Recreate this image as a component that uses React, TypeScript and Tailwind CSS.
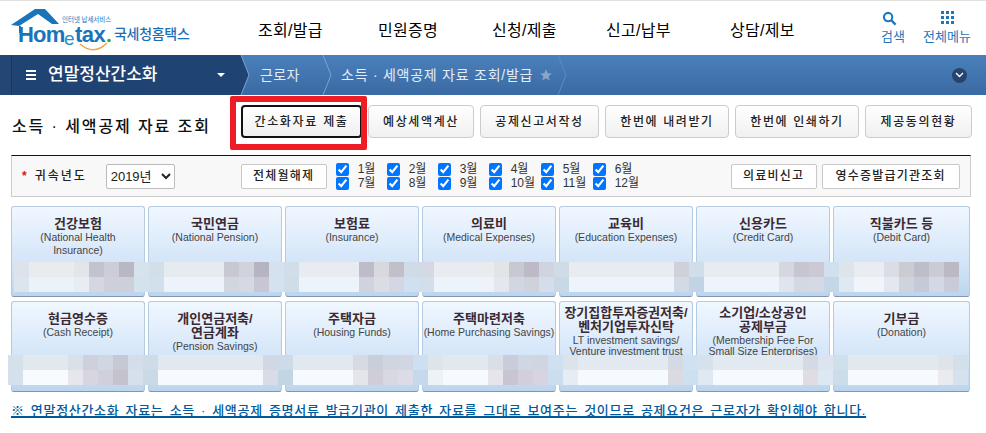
import React from 'react';

const KR = "font-['Liberation_Sans','Noto_Sans_CJK_KR',sans-serif]";

// 가림 처리된 모자이크 [색, 칸 수]
type Seg = [string, number];

const row1Top: Seg[] = [['#dde3ea',1],['#e8ecef',3],['#e2e5ea',1],['#c3c3cf',1],['#cdcdd7',1],['#bab7c4',1],['#d6e2ec',1],['#d2dfe9',1],['#e6ebf0',4],['#c8c8d3',1],['#d0d3dc',1],['#b7b4c1',1],['#d5e1ee',1],['#d1dde8',1],['#e8ecf0',4],['#bebcc8',1],['#d7d9de',1],['#c0bfca',1],['#cfdbe6',1],['#d5d9e6',1],['#e8ecf1',3],['#e9ecef',1],['#e3e4e8',1],['#c8c8d2',1],['#bdb9c6',1],['#d0d3e0',1],['#cfdce6',1],['#e7ecf0',7],['#ced0da',1],['#cfdee9',1],['#e6ecf0',5],['#d5d7e0',1],['#c6c5d0',1],['#cbc9d4',1],['#d0e0ef',1],['#dde5ea',1],['#e9edf1',2],['#dadde6',1],['#cdcbd2',1],['#bebdca',1],['#cbcbd6',1],['#bcb9c5',1]];
const row1Bottom: Seg[] = [['#dbe5ee',1],['#ecf2fa',3],['#e8edf3',1],['#d4d7e0',1],['#cdcfdb',2],['#d4e2ee',1],['#d2e0eb',1],['#ecf3fb',4],['#d2d6df',1],['#d5d9e2',1],['#c6c7d3',1],['#d4e2f0',1],['#cfdde9',1],['#ecf3fb',4],['#d0d3de',1],['#dadde6',1],['#d4d7e1',1],['#d0e0f0',1],['#d2deea',1],['#ecf3fb',3],['#eef3fa',1],['#e4e8ee',1],['#d2d6e2',1],['#cfd2db',1],['#d4ddeb',1],['#c8d9e5',1],['#eef4fc',7],['#d3dae6',1],['#c1d4e5',1],['#eef4fc',5],['#e0e4ec',1],['#d4d8e3',1],['#d5d9e4',1],['#c4d7e8',1],['#e0e8f1',1],['#f0f5fc',2],['#e3e8f0',1],['#cfd3de',1],['#c6cad8',1],['#d3d8e4',1],['#c8cbd9',1]];
const row2Top: Seg[] = [['#d5e0ea',1],['#e1e8ee',3],['#d8e0e8',1],['#cfd0dc',1],['#cfd7e2',1],['#c6c8d4',1],['#d3deea',1],['#cfdce8',1],['#e1e8ef',7],['#cfd8e3',1],['#cddbe8',1],['#e1e8ef',4],['#d7dae3',1],['#c8cfda',1],['#cfd6e0',1],['#d0d7e2',1],['#cde0f2',1],['#dde4ea',1],['#e2e9ee',3],['#d9dee7',1],['#c9ccda',1],['#cfd8e2',1],['#cfd5e1',1],['#cfe0f0',1],['#dbe4e9',1],['#e2e9f0',6],['#d3dae4',1],['#d0e2f2',1],['#d5e1ec',1],['#e2e9f0',6],['#d4dae4',1],['#dce5ef',1],['#cfdfec',1],['#e2e9ee',6],['#dfe4ea',1],['#d3e0ec',1]];
const row2Bottom: Seg[] = [['#d2e1eb',1],['#f7fbfe',3],['#e6e6ec',1],['#d7d5de',1],['#cfd0dc',1],['#c6c2cc',1],['#d6dfec',1],['#c9d9e6',1],['#f6fafe',7],['#d9dbe6',1],['#c2d5e3',1],['#f6fafe',4],['#e4e5ea',1],['#cfcdd6',1],['#d8d8e0',1],['#dcdbe6',1],['#c6d9ec',1],['#edf2f6',1],['#f6fafe',3],['#e7e4ec',1],['#c8c5d2',1],['#d2cfdb',1],['#d6d4e0',1],['#cbdeee',1],['#e6ecf3',1],['#f6fafe',6],['#dbd9e1',1],['#cde0ef',1],['#dfe9f2',1],['#f6fafe',6],['#dfdde3',1],['#dde8f2',1],['#cbdcea',1],['#f6fafe',6],['#ebebef',1],['#d5e2ee',1]];

const row1 = [
  { title: ['건강보험'], sub: ['(National Health', 'Insurance)'] },
  { title: ['국민연금'], sub: ['(National Pension)'] },
  { title: ['보험료'], sub: ['(Insurance)'] },
  { title: ['의료비'], sub: ['(Medical Expenses)'] },
  { title: ['교육비'], sub: ['(Education Expenses)'] },
  { title: ['신용카드'], sub: ['(Credit Card)'] },
  { title: ['직불카드 등'], sub: ['(Debit Card)'] },
];
const row2 = [
  { title: ['현금영수증'], sub: ['(Cash Receipt)'] },
  { title: ['개인연금저축/', '연금계좌'], sub: ['(Pension Savings)'] },
  { title: ['주택자금'], sub: ['(Housing Funds)'] },
  { title: ['주택마련저축'], sub: ['(Home Purchasing Savings)'] },
  { title: ['장기집합투자증권저축/', '벤처기업투자신탁'], sub: ['LT investment savings/', 'Venture investment trust'], tight: true },
  { title: ['소기업/소상공인', '공제부금'], sub: ['(Membership Fee For', 'Small Size Enterprises)'], tight: true },
  { title: ['기부금'], sub: ['(Donation)'] },
];
const months = ['1월','2월','3월','4월','5월','6월','7월','8월','9월','10월','11월','12월'];
const topButtons = [
  { label: '예상세액계산', w: 'w-[106px]' },
  { label: '공제신고서작성', w: 'w-[119px]' },
  { label: '한번에 내려받기', w: 'w-[124px]' },
  { label: '한번에 인쇄하기', w: 'w-[124px]' },
  { label: '제공동의현황', w: 'w-[107px]' },
];

function Mosaic({ rows, className }: { rows: Seg[][]; className: string }) {
  return (
    <div className={`absolute flex flex-col ${className}`}>
      {rows.map((segs, i) => (
        <div key={i} className="flex h-[15px]">
          {segs.map(([color, n], j) => (
            <span key={j} style={{ backgroundColor: color, width: n * 15 }} />
          ))}
        </div>
      ))}
    </div>
  );
}

function Card({ title, sub, tight }: { title: string[]; sub: string[]; tight?: boolean }) {
  const two = title.length > 1;
  return (
    <div className={`h-[91px] rounded-[3px] border border-[#b4cbe2] border-b-[#8296b0] bg-[linear-gradient(#f0f7ff,#d3e5f8_62%,#bcd5ee)] text-center ${tight ? 'pt-[4px]' : two ? 'pt-[10px]' : 'pt-[9px]'}`}>
      {title.map((t) => (
        <div key={t} className={`${KR} text-[13px] font-semibold text-[#3a2a33] whitespace-nowrap ${two ? 'leading-[14px]' : 'leading-[15px]'}`}>{t}</div>
      ))}
      {sub.map((s, i) => (
        <div key={s} className={`${KR} text-[10.5px] text-[#444] whitespace-nowrap ${tight ? 'leading-[11px]' : 'leading-[13px]'} ${i === 0 && tight ? 'mt-[1px]' : ''}`}>{s}</div>
      ))}
    </div>
  );
}

function Logo() {
  return (
    <svg width="200" height="54" viewBox="0 0 200 54" className="shrink-0">
      <polygon points="11,24 35,8 45,8 59,23 52,23 38,13 19,25" fill="#1a74bb" />
      <path d="M20 25v7" stroke="#1a74bb" strokeWidth="2" />
      <text x="18" y="41" fontFamily="Liberation Sans" fontWeight="700" fontSize="22" fill="#1a74bb" letterSpacing="-0.8">Hom</text>
      <text x="64" y="44" fontFamily="Liberation Sans" fontSize="19" fill="#2a8fc9">e</text>
      <text x="75" y="41" fontFamily="Liberation Sans" fontWeight="700" fontSize="22" fill="#1a74bb" letterSpacing="-0.5">tax</text>
      <circle cx="109" cy="39.5" r="1.8" fill="#2fa84f" />
      <path d="M80 43q14 12 27-1" fill="none" stroke="#f2a53a" strokeWidth="1.4" />
      <text x="62" y="20.5" fontFamily="Noto Sans CJK KR" fontSize="6.5" fill="#1a74bb">인터넷 납세서비스</text>
      <text x="114" y="38" fontFamily="Noto Sans CJK KR" fontWeight="500" fontSize="14" fill="#1d6fb5" letterSpacing="-0.3">국세청홈택스</text>
    </svg>
  );
}

function GrayBtn({ label, className }: { label: string; className: string }) {
  return (
    <button className={`${KR} h-[25px] rounded-[2px] border border-[#c8c8c8] bg-white text-[12px] font-medium tracking-[1.2px] text-[#222] ${className}`}>{label}</button>
  );
}

export default function App() {
  return (
    <div className={`${KR} relative h-[433px] w-[986px] overflow-hidden bg-white`}>
      {/* 상단 헤더 */}
      <header className="flex h-[55px] items-center border-t border-[#e0e0dc]">
        <Logo />
        <nav className="ml-[58px] mt-[5px] flex text-[16px] tracking-[0.3px] text-black whitespace-nowrap">
          <a className="w-[120px]">조회/발급</a>
          <a className="w-[114px]">민원증명</a>
          <a className="w-[114px]">신청/제출</a>
          <a className="w-[124px]">신고/납부</a>
          <a className="w-[99px]">상담/제보</a>
        </nav>
        <div className="ml-[52px] mt-[10px] flex w-[24px] flex-col items-center self-start text-[13px] text-[#1c77bc]">
          <svg width="15" height="15" viewBox="0 0 16 16" className="-ml-[7px]">
            <circle cx="6.5" cy="6.5" r="4.5" fill="none" stroke="#1c77bc" strokeWidth="2.2" />
            <path d="M10 10l4.5 4.5" stroke="#1c77bc" strokeWidth="2.4" />
          </svg>
          <span className="mt-[4px] whitespace-nowrap leading-[14px]">검색</span>
        </div>
        <div className="ml-[18px] mt-[10px] flex w-[48px] flex-col items-center self-start text-[13px] text-[#1c77bc]">
          <div className="grid grid-cols-3 gap-[2px]">
            {Array.from({ length: 9 }).map((_, i) => (
              <span key={i} className="h-[3px] w-[3px] bg-[#1c77bc]" />
            ))}
          </div>
          <span className="mt-[6px] whitespace-nowrap leading-[14px]">전체메뉴</span>
        </div>
      </header>

      {/* 경로 바 */}
      <div className="flex h-[40px] items-center bg-[linear-gradient(#4a80ba,#3a6aa4)] text-[#e4ecf6]">
        <div className="relative flex h-full w-[240px] items-center border-l-[11px] border-[#234675] bg-[#1f4373] pl-[15px]">
          <span className="absolute left-0 top-0 h-full w-px bg-[#18365f]" />
          <span className="flex w-[10px] flex-col gap-[2px]">
            <i className="h-[2px] bg-white" /><i className="h-[2px] bg-white" /><i className="h-[2px] bg-white" />
          </span>
          <span className="ml-[12px] text-[17px] font-medium text-white">연말정산간소화</span>
          <span className="ml-[60px] h-0 w-0 border-x-[4px] border-t-[4px] border-x-transparent border-t-white" />
          <svg width="10" height="40" viewBox="0 0 10 40" className="absolute left-[229px] top-0">
            <polygon points="0,0 1,0 9,20 1,40 0,40" fill="#1f4373" />
            <path d="M1 0l8 20-8 20" fill="none" stroke="#7ea3cf" strokeWidth="1" />
          </svg>
        </div>
        <span className="ml-[20px] text-[14px] w-[62px] tracking-[0.4px]">근로자</span>
        <svg width="10" height="40" viewBox="0 0 10 40">
          <path d="M1 0l8 20-8 20" fill="none" stroke="#7ea3cf" strokeWidth="1" />
        </svg>
        <span className="ml-[9px] text-[14px] tracking-[0.75px] whitespace-nowrap">소득 · 세액공제 자료 조회/발급</span>
        <svg width="14" height="14" viewBox="0 0 24 24" className="ml-[6px]">
          <polygon points="12,2 15,9 22,9.5 16.5,14 18.5,21.5 12,17.5 5.5,21.5 7.5,14 2,9.5 9,9" fill="#8aa5c8" />
        </svg>
        <svg width="10" height="40" viewBox="0 0 10 40" className="ml-[4px]">
          <path d="M1 0l8 20-8 20" fill="none" stroke="#5f8cc0" strokeWidth="1" />
        </svg>
        <span className="ml-auto mr-[19px] flex h-[15px] w-[15px] items-center justify-center rounded-full bg-[#27436f]">
          <svg width="9" height="6" viewBox="0 0 9 6"><path d="M1 1l3.5 3.5L8 1" fill="none" stroke="#fff" strokeWidth="1.4" /></svg>
        </span>
      </div>

      {/* 제목 + 버튼 */}
      <div className="flex h-[60px] items-start pl-[12px] pt-[10px]">
        <h1 className="mt-[11px] w-[229px] text-[16px] font-medium leading-[22px] tracking-[1.9px] text-[#111] whitespace-nowrap">소득 · 세액공제 자료 조회</h1>
        <button className="h-[33px] w-[121px] rounded-[4px] border-2 border-[#111] bg-[linear-gradient(#fff,#f0f0f0)] text-[12px] font-medium tracking-[1.7px] text-[#222] whitespace-nowrap">간소화자료 제출</button>
        <div className="ml-[6px] flex gap-[6px]">
          {topButtons.map((b) => (
            <button key={b.label} className={`h-[33px] rounded-[4px] border border-[#ccc] bg-[linear-gradient(#fff,#f0f0f0)] text-[12px] font-medium tracking-[1.6px] text-[#222] whitespace-nowrap ${b.w}`}>{b.label}</button>
          ))}
        </div>
      </div>
      {/* 빨간 강조 박스 */}
      <div className="pointer-events-none absolute left-[230px] top-[96px] h-[54px] w-[137px] rounded-[2px] border-[6px] border-[#ee1c25]" />

      {/* 조회 조건 */}
      <div className="ml-[11px] flex h-[42px] w-[960px] items-center border border-t-[#111] border-[#ccc] bg-[#f8f8f8]">
        <span className="ml-[10px] text-[12px] font-bold text-[#d8121c]">*</span>
        <span className="ml-[8px] w-[71px] text-[12px] font-medium tracking-[2px] text-[#222] whitespace-nowrap">귀속년도</span>
        <select className="h-[25px] w-[69px] rounded-[2px] border border-[#bbb] bg-white text-[13px] text-[#222]">
          <option>2019년</option>
        </select>
        <GrayBtn label="전체월해제" className="ml-[66px] w-[86px]" />
        <div className="ml-[9px] grid grid-cols-[51px_51px_51px_52px_52px_52px] gap-y-[1px]">
          {months.map((m) => (
            <label key={m} className="flex h-[13px] items-center text-[12px] leading-[13px] text-[#333]">
              <input type="checkbox" defaultChecked readOnly className="m-0 h-[13px] w-[13px]" />
              <span className="ml-[9px]">{m}</span>
            </label>
          ))}
        </div>
        <GrayBtn label="의료비신고" className="ml-[86px] w-[86px]" />
        <GrayBtn label="영수증발급기관조회" className="ml-[5px] w-[138px]" />
      </div>

      {/* 공제 항목 카드 */}
      <div className="relative ml-[11px] mt-[9px] grid grid-cols-[repeat(6,134px)_137px] gap-x-[3px]">
        {row1.map((c) => <Card key={c.title[0]} {...c} />)}
        <Mosaic rows={[row1Top, row1Bottom]} className="left-[3px] top-[56px]" />
      </div>
      <div className="relative ml-[11px] mt-[4px] grid grid-cols-[repeat(6,134px)_137px] gap-x-[3px]">
        {row2.map((c) => <Card key={c.title[0]} {...c} />)}
        <Mosaic rows={[row2Top, row2Bottom]} className="left-[-3px] top-[54px]" />
      </div>

      <p className="ml-[11px] mt-[10px] whitespace-nowrap text-[13px] font-medium leading-[18px] tracking-[0.7px] text-[#005a9c] underline decoration-[1.5px] [word-spacing:1.8px]">
        ※ 연말정산간소화 자료는 소득 · 세액공제 증명서류 발급기관이 제출한 자료를 그대로 보여주는 것이므로 공제요건은 근로자가 확인해야 합니다.
      </p>
    </div>
  );
}
